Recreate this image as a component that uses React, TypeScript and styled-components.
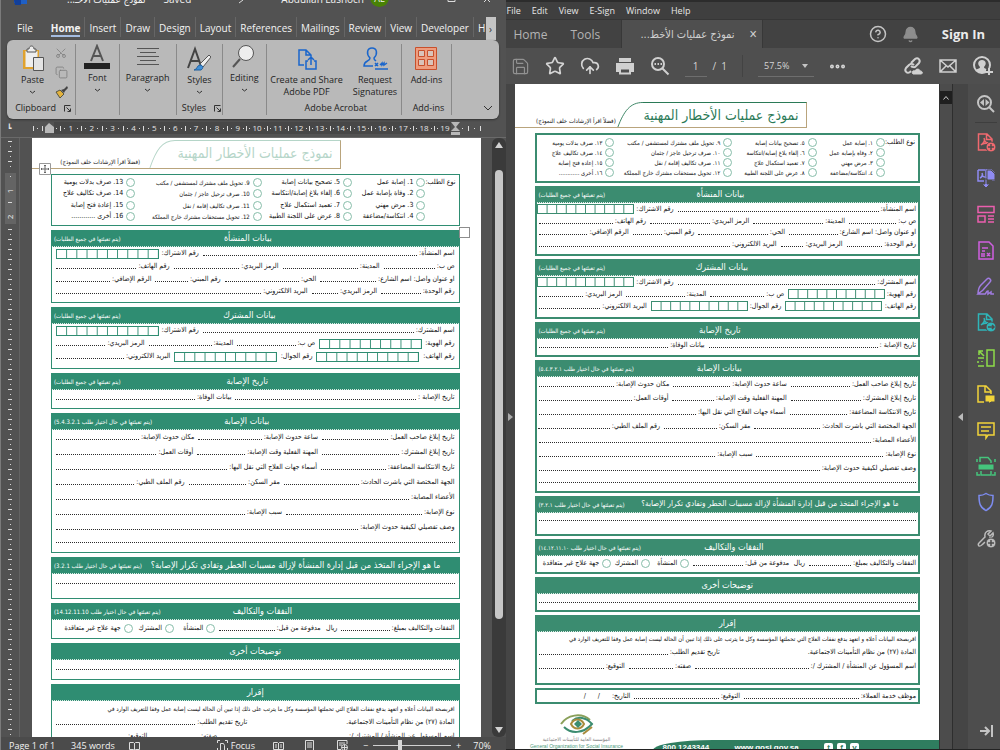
import React from "react";
import styled, { createGlobalStyle, ThemeProvider, css } from "styled-components";
import {
  Bell, CircleHelp, CloudUpload, Copy, Ellipsis, Save, Scissors, Star,
} from "lucide-react";

const GlobalStyle = createGlobalStyle`
  * { box-sizing: border-box; }
  html, body { margin: 0; padding: 0; background: #2b2b2b; }
  body { font-family: "Open Sans", "DejaVu Sans Condensed", "DejaVu Sans", sans-serif; overflow: hidden; }
  button, input { font: inherit; color: inherit; margin: 0; padding: 0; border: 0; background: none; border-radius: 0; }
  a { color: inherit; text-decoration: none; }
  svg { display: block; flex: none; }
`;

const arabic = `"DejaVu Sans Condensed", "DejaVu Sans", sans-serif`;

/* ---------- form themes ---------- */

const wordForm = {
  green: "#2f8d72", border: 1, gap: 4, head: 17, cells: 103, cellHeight: 10, arabicDigits: false,
  titleColor: "#b5d5c8", top: 2, headerHeight: 29, titleBox: 166, left: 19, right: 21, rowPad: 4, longTitle: 9,
  heights: { options: 52, s1: 73, s2: 62, s3: 36, s4: 140, s5: 42, s6: 36, s7: 37, s8: 70 },
};
const pdfForm = {
  green: "#3b8c70", border: 2, gap: 3, head: 17, cells: 97, cellHeight: 10, arabicDigits: true,
  titleColor: "#2b7a57", top: 18, headerHeight: 26, titleBox: 162, left: 20, right: 19, rowPad: 2, longTitle: 8,
  heights: { options: 50, s1: 70, s2: 60, s3: 35, s4: 133, s5: 40, s6: 35, s7: 35, s8: 70 },
};
type FormTheme = typeof wordForm;

/* ---------- form parts ---------- */

const Sheet = styled.form`
  flex: 1;
  min-width: 0;
  background: #fff;
  color: #111;
  padding-top: ${(p: any) => p.theme.top}px;
  font-family: ${arabic};
  font-size: 7px;
  line-height: 9px;
  overflow: hidden;
`;
const SheetHeader = styled.div`
  display: flex;
  align-items: stretch;
  width: 69%;
  height: ${(p: any) => p.theme.headerHeight}px;
  padding-left: ${(p: any) => p.theme.left}px;
  border-bottom: 1px solid #b9a47c;
`;
const Hint = styled.span`
  flex: 1 1 0;
  min-width: 0;
  align-self: flex-end;
  padding-bottom: 2px;
  font-size: 6px;
  line-height: 9px;
  white-space: nowrap;
  text-align: center;
`;
const FormTitle = styled.h1`
  margin: 0;
  flex: 0 0 ${(p: any) => p.theme.titleBox}px;
  padding-right: 8px;
  border-top: 1px solid ${(p: any) => p.theme.titleColor};
  border-right: 1px solid #b9a47c;
  color: ${(p: any) => p.theme.titleColor};
  font-size: 14px;
  font-weight: 400;
  line-height: 24px;
  text-align: right;
  white-space: nowrap;
`;
const FormBody = styled.div`
  display: flex;
  flex-direction: column;
  gap: ${(p: any) => p.theme.gap}px;
  padding: 5px ${(p: any) => p.theme.right}px 0 ${(p: any) => p.theme.left}px;
`;
const Options = styled.div<{ $h: number }>`
  min-height: ${(p) => p.$h}px;
  border: ${(p: any) => p.theme.border}px solid ${(p: any) => p.theme.green};
  padding: 2px 3px 3px;
  display: grid;
  grid-template-columns: 30fr 73fr 90fr 126fr 80fr;
`;
const OptionsLabel = styled.span`
  padding-top: 1px;
  white-space: nowrap;
`;
const OptionColumn = styled.div<{ $small: boolean }>`
  display: flex;
  flex-direction: column;
  min-width: 0;
  font-size: ${(p) => (p.$small ? 6 : 7)}px;
`;
const Choice = styled.label`
  flex: 1;
  display: flex;
  align-items: center;
  gap: 3px;
  white-space: nowrap;
  min-height: 9px;
`;
const Radio = styled.input.attrs({ type: "radio" })`
  appearance: none;
  flex: none;
  width: 9px;
  height: 9px;
  border: 1px solid #86bda9;
  border-radius: 50%;
`;
const Section = styled.section<{ $h: number }>`
  display: flex;
  flex-direction: column;
  min-height: ${(p) => p.$h}px;
  border: ${(p: any) => p.theme.border}px solid ${(p: any) => p.theme.green};
  border-top: 0;
`;
const SectionHead = styled.header<{ $right: number; $left: number }>`
  display: grid;
  grid-template-columns: minmax(0, ${(p) => p.$right}fr) auto minmax(0, ${(p) => p.$left}fr);
  align-items: center;
  height: ${(p: any) => p.theme.head}px;
  background: ${(p: any) => p.theme.green};
  border-bottom: 1px dotted #d8ebe4;
  color: #fff;
  white-space: nowrap;
`;
const SectionTitle = styled.h2<{ $long?: boolean }>`
  margin: 0;
  grid-column: 2;
  font-size: ${(p: any) => (p.$long ? p.theme.longTitle : 9)}px;
  line-height: 14px;
  font-weight: 400;
`;
const Note = styled.span`
  display: flex;
  justify-content: flex-end;
  padding-left: 2px;
  font-size: 6px;
`;
const Rows = styled.div<{ $bottom: number }>`
  flex: 1;
  display: flex;
  flex-direction: column;
  padding: 0 ${(p: any) => p.theme.rowPad}px ${(p) => p.$bottom}px;
`;
const Row = styled.div`
  flex: 1;
  display: flex;
  align-items: center;
`;
const FieldLabel = styled.label<{ $w: number }>`
  flex: ${(p) => p.$w} 1 0;
  min-width: 0;
  display: flex;
  align-items: center;
  gap: 2px;
  padding-left: 4px;
  white-space: nowrap;
  &:last-child { padding-left: 0; }
`;
const Leader = styled.input`
  flex: 1 1 0;
  min-width: 0;
  width: 0;
  height: 5px;
  border-bottom: 1px dotted #2c2c2c;
`;
const Cells = styled.input`
  margin-right: auto;
  flex: none;
  width: ${(p: any) => p.theme.cells}px;
  height: ${(p: any) => p.theme.cellHeight}px;
  border: 1px solid ${(p: any) => p.theme.green};
  border-left: 0;
  background-image: linear-gradient(to right, ${(p: any) => p.theme.green} 1px, transparent 1px);
  background-size: 10% 100%;
`;
const Text = styled.span<{ $w?: number }>`
  ${(p) => p.$w ? css`flex: ${p.$w} 1 0; min-width: 0;` : css`flex: none;`}
  white-space: nowrap;
`;
const Declaration = styled.p`
  flex: 1;
  margin: 0;
  font-size: 6px;
  white-space: nowrap;
`;
const SignBox = styled.div`
  display: flex;
  align-items: center;
  height: 16px;
  padding: 0 2px;
  border: 2px solid ${(p: any) => p.theme.green};
`;
const SheetFooter = styled.footer`
  display: flex;
  align-items: flex-start;
  padding: 8px 0 0 16px;
`;
const Brand = styled.div`
  display: flex;
  flex-direction: column;
  align-items: center;
  width: 92px;
  color: #777;
  font-size: 5px;
  line-height: 7px;
  white-space: nowrap;
`;
const BrandLatin = styled.span`
  color: #4b9a7c;
  font-family: "Liberation Sans", sans-serif;
`;
const Contact = styled.div`
  flex: 1;
  margin: 28px 0 0 30px;
  height: 30px;
  padding: 3px 80px 0 10px;
  display: flex;
  justify-content: space-between;
  background: #2f7d5f;
  border-top-left-radius: 60px 10px;
  color: #fff;
  font: 700 8px/10px "Liberation Sans", sans-serif;
`;
const Social = styled.span`
  display: flex;
  gap: 4px;
`;
const SocialLink = styled.a`
  width: 9px;
  height: 9px;
  border-radius: 2px;
  background: #fff;
  color: #2f7d5f;
  text-align: center;
`;

type FieldSpec = { w: number; t: string; kind?: "cells" | "text" };
const f = (w: number, t: string, kind?: "cells" | "text"): FieldSpec => ({ w, t, kind });

function FieldRow({ fields }: { fields: FieldSpec[] }) {
  return (
    <Row>
      {fields.map((x, i) =>
        x.kind === "text" ? (
          <Text key={i} $w={x.w}>{x.t}</Text>
        ) : (
          <FieldLabel key={i} $w={x.w}>
            {x.t && <Text>{x.t}</Text>}
            {x.kind === "cells" ? <Cells /> : <Leader aria-label={x.t ? undefined : "سطر إضافي"} />}
          </FieldLabel>
        )
      )}
    </Row>
  );
}

function Block({ title, note, h, right = 1, left = 1, bottom, long, children }: any) {
  return (
    <Section $h={h}>
      <SectionHead $right={right} $left={left}>
        <SectionTitle $long={long}>{title}</SectionTitle>
        {note && <Note>{note}</Note>}
      </SectionHead>
      <Rows $bottom={bottom}>{children}</Rows>
    </Section>
  );
}

const optionColumns = [
  ["إصابة عمل", "وفاة بإصابة عمل", "مرض مهني", "انتكاسة/مضاعفة"],
  ["تصحيح بيانات إصابة", "إلغاء بلاغ إصابة/انتكاسة", "تعميد استكمال علاج", "عرض على اللجنة الطبية"],
  ["تحويل ملف مشترك لمستشفى / مكتب", "صرف ترحيل عاجز / جثمان", "صرف تكاليف إقامة / نقل", "تحويل مستحقات مشترك خارج المملكة"],
  ["صرف بدلات يومية", "صرف تكاليف علاج", "إعادة فتح إصابة", "أخرى ............"],
];
const establishment = [
  [f(254, "اسم المنشأة:"), f(144, "رقم الاشتراك:", "cells")],
  [f(73, "ص ب:"), f(100, "المدينة:"), f(108, "الرمز البريدي:"), f(117, "رقم الهاتف:")],
  [f(138, "او عنوان واصل: اسم الشارع:"), f(94, "الحي:"), f(67, "رقم المبني:"), f(98, "الرقم الإضافي:")],
  [f(75, "رقم الوحدة:"), f(67, "الرمز البريدي:"), f(257, "البريد الالكتروني:")],
];
const subscriber = [
  [f(254, "اسم المشترك:"), f(144, "رقم الاشتراك:", "cells")],
  [f(139, "رقم الهوية:", "cells"), f(80, "ص ب:"), f(87, "المدينة:"), f(91, "الرمز البريدي:")],
  [f(140, "رقم الهاتف:", "cells"), f(140, "رقم الجوال:", "cells"), f(116, "البريد الالكتروني:")],
];
const injury = [
  [f(135, "تاريخ إبلاغ صاحب العمل:"), f(122, "ساعة حدوث الإصابة:"), f(141, "مكان حدوث الإصابة:")],
  [f(135, "تاريخ إبلاغ المشترك:"), f(123, "المهنة الفعلية وقت الإصابة:"), f(140, "أوقات العمل:")],
  [f(135, "تاريخ الانتكاسة المضاعفة:"), f(264, "أسماء جهات العلاج التي نقل اليها:")],
  [f(174, "الجهة المختصة التي باشرت الحادث:"), f(93, "مقر السكن:"), f(131, "رقم الملف الطبي:")],
  [f(398, "الأعضاء المصابة:")],
  [f(170, "نوع الإصابة:"), f(228, "سبب الإصابة:")],
  [f(398, "وصف تفصيلي لكيفية حدوث الإصابة:")],
  [f(398, "")],
];

function ReportForm({ theme, id, children }: { theme: FormTheme; id: string; children?: React.ReactNode }) {
  const digits = (s: string) =>
    theme.arabicDigits ? s.replace(/\d/g, (d) => "٠١٢٣٤٥٦٧٨٩"[Number(d)]) : s;
  const h = theme.heights;
  const all = "(يتم تعبئتها في جميع الطلبات)";
  const only = (n: string) => `(يتم تعبئتها في حال اختيار طلب ${digits(n)})`;
  return (
    <ThemeProvider theme={theme}>
      <Sheet>
        <SheetHeader>
          <Hint dir="rtl">(فضلاً اقرأ الإرشادات خلف النموذج)</Hint>
          <svg width="26" height={theme.headerHeight - 1} viewBox="0 0 30 27" fill="none" stroke={theme.titleColor} preserveAspectRatio="none">
            <path d="M1 27C8 10 15 .5 30 .5" />
          </svg>
          <FormTitle dir="rtl">نموذج عمليات الأخطار المهنية</FormTitle>
        </SheetHeader>
        <FormBody dir="rtl">
          <Options $h={h.options} role="radiogroup" aria-labelledby={`${id}-kind`}>
            <OptionsLabel id={`${id}-kind`}>نوع الطلب:</OptionsLabel>
            {optionColumns.map((col, c) => (
              <OptionColumn key={c} $small={c === 2 || theme.arabicDigits}>
                {col.map((label, r) => (
                  <Choice key={r}>
                    <Radio name={`${id}-request`} />
                    <span>{digits(String(c * 4 + r + 1))}. {label}</span>
                  </Choice>
                ))}
              </OptionColumn>
            ))}
          </Options>
          <Block title="بيانات المنشأة" note={all} h={h.s1} right={188} left={173} bottom={4}>
            {establishment.map((r, i) => <FieldRow key={i} fields={r} />)}
          </Block>
          <Block title="بيانات المشترك" note={all} h={h.s2} right={186} left={174} bottom={5}>
            {subscriber.map((r, i) => <FieldRow key={i} fields={r} />)}
          </Block>
          <Block title="تاريخ الإصابة" note={all} h={h.s3} right={190} left={174} bottom={4}>
            <FieldRow fields={[f(221, "تاريخ الإصابة :"), f(177, "بيانات الوفاة:")]} />
          </Block>
          <Block title="بيانات الإصابة" note={only("5.4.3.2.1")} h={h.s4} right={188} left={171} bottom={6}>
            {injury.map((r, i) => <FieldRow key={i} fields={r} />)}
          </Block>
          <Block long title="ما هو الإجراء المتخذ من قبل إدارة المنشأة لإزالة مسببات الخطر وتفادي تكرار الإصابة؟" note={only("3.2.1")} h={h.s5} right={19} left={103} bottom={10}>
            <FieldRow fields={[f(398, "")]} />
          </Block>
          <Block title="النفقات والتكاليف" note={only("14.12.11.10")} h={h.s6} right={165} left={179} bottom={2}>
            <Row>
              <FieldLabel $w={115}><Text>النفقات والتكاليف بمبلغ:</Text><Leader /></FieldLabel>
              <Text $w={17}>ريال</Text>
              <FieldLabel $w={103}><Text>مدفوعة من قبل:</Text><Leader /></FieldLabel>
              <Text $w={42}><Choice><Radio name={`${id}-payer`} />المنشأة</Choice></Text>
              <Text $w={42}><Choice><Radio name={`${id}-payer`} />المشترك</Choice></Text>
              <Text $w={78}><Choice><Radio name={`${id}-payer`} />جهة علاج غير متعاقدة</Choice></Text>
            </Row>
          </Block>
          <Block title="توضيحات أخرى" h={h.s7} bottom={4}>
            <FieldRow fields={[f(398, "")]} />
          </Block>
          <Block title="إقرار" h={h.s8} bottom={10}>
            <Row><Declaration>اقربصحة البيانات أعلاه و اتعهد بدفع نفقات العلاج التي تحملتها المؤسسة وكل ما يترتب على ذلك إذا تبين أن الحالة ليست إصابة عمل وفقا للتعريف الوارد في</Declaration></Row>
            <FieldRow fields={[f(207, "المادة (٢٧) من نظام التأمينات الاجتماعية.", "text"), f(191, "تاريخ تقديم الطلب:")]} />
            <FieldRow fields={[f(238, "اسم المسؤول عن المنشأة / المشترك /:"), f(67, "صفته:"), f(93, "التوقيع:")]} />
          </Block>
          {children}
        </FormBody>
        {children && (
          <SheetFooter>
            <Brand>
              <svg width="36" height="24" viewBox="0 0 36 24" fill="none" strokeWidth="2">
                <path d="M2 12C8 3 22 0 31 8" stroke="#8aa05a" />
                <path d="M5 15c7 7 19 7 28-3C27 5 19 4 13 9" stroke="#3c8c70" />
                <path d="M12 12c3-6 10-6 13 0-3 6-10 6-13 0z" stroke="#a98b3c" />
                <path d="m15 12 4-4 4 4-4 4z" fill="#3c8c70" stroke="none" />
                <path d="M24 22l9-7" stroke="#a98b3c" />
              </svg>
              <span dir="rtl">المؤسسة العامة للتأمينات الاجتماعية</span>
              <BrandLatin>General Organization for Social Insurance</BrandLatin>
            </Brand>
            <Contact>
              <span>800 1243344</span>
              <a href="#site">www.gosi.gov.sa</a>
              <Social>
                <SocialLink href="#t">t</SocialLink><SocialLink href="#f">f</SocialLink><SocialLink href="#y">y</SocialLink>
              </Social>
            </Contact>
          </SheetFooter>
        )}
      </Sheet>
    </ThemeProvider>
  );
}

/* ---------- Word window ---------- */

const Desktop = styled.main`
  display: flex;
  height: 100vh;
`;
const WordWindow = styled.section`
  flex: 505 1 0;
  min-width: 0;
  display: flex;
  flex-direction: column;
  background: #525252;
  border-left: 1px solid #7b7b7b;
  color: #f2f2f2;
  font-size: 10px;
  position: relative;
`;
const TitleBar = styled.header`
  height: 17px;
  overflow: hidden;
  display: flex;
  align-items: flex-start;
  padding: 0 16px 0 13px;
  line-height: 14px;
`;
const TitleText = styled.span<{ $before: number }>`
  margin: -8px 0 0 ${(p) => p.$before}px;
  font-family: "Open Sans", ${arabic};
  white-space: nowrap;
`;
const PenMark = styled.svg`
  margin-left: 46px;
`;
const Avatar = styled.span`
  margin: -12px 0 0 6px;
  width: 19px;
  height: 19px;
  border-radius: 50%;
  background: #498205;
  font-size: 9px;
  line-height: 22px;
  text-align: center;
`;
const WindowMarks = styled.svg`
  margin-left: auto;
`;
const Tabs = styled.nav`
  height: 23px;
  display: flex;
  align-items: stretch;
  padding: 0 10px 0 12px;
  overflow: hidden;
`;
const Tab = styled.button<{ $active?: boolean }>`
  padding: 0 4px;
  line-height: 18px;
  border-right: 1px solid #666;
  align-self: flex-start;
  flex: none;
  font-weight: ${(p) => (p.$active ? 700 : 400)};
  span { display: block; height: 20px; line-height: 23px; border-bottom: ${(p) => (p.$active ? "2px solid #a5bce0" : "0")}; }
`;
const FileTab = styled(Tab)`
  border: 0;
  margin-right: 10px;
`;
const LastTab = styled(Tab)`
  border: 0;
  padding-right: 0;
`;
const TabScroll = styled.button`
  margin-left: auto;
  flex: none;
  width: 10px;
  background: #c4c4c4;
  color: #333;
`;
const Ribbon = styled.div`
  margin: 0 7px 0 6px;
  height: 79px;
  display: flex;
  background: #b9b9b9;
  border-radius: 6px;
  box-shadow: 0 1px 2px #333;
  color: #232323;
  font-size: 9px;
  line-height: 12px;
`;
const Group = styled.div<{ $w: number; $last?: boolean }>`
  flex: ${(p) => p.$w} 1 0;
  min-width: 0;
  margin: 4px 0;
  border-right: ${(p) => (p.$last ? 0 : "1px solid #8a8a8a")};
  display: flex;
  flex-direction: column;
  align-items: center;
`;
const GroupTools = styled.div`
  flex: 1;
  display: flex;
  justify-content: center;
  gap: 10px;
`;
const BigButton = styled.button`
  display: flex;
  flex-direction: column;
  align-items: center;
  white-space: pre-line;
  svg + span { margin-top: 2px; }
`;
const ClipboardTools = styled(GroupTools)`
  padding-left: 6px;
`;
const SmallTools = styled.div`
  display: flex;
  flex-direction: column;
  gap: 7px;
  padding-top: 3px;
  color: #7c7c7c;
`;
const CutIcon = styled(Scissors)`
  transform: rotate(-90deg);
`;
const Caption = styled.div`
  display: flex;
  align-items: center;
  gap: 8px;
  height: 14px;
  padding-left: 4px;
  white-space: nowrap;
`;
const RibbonToggle = styled.button`
  margin: auto 6px 4px auto;
`;
const RulerBar = styled.div`
  display: flex;
  align-items: center;
  height: 12px;
  margin: 3px 0;
  padding-left: 6px;
  font-size: 8px;
  line-height: 12px;
  color: #e4e4e4;
`;
const RulerCorner = styled.span`
  width: 24px;
  font-weight: 700;
`;
const RulerScale = styled.div`
  flex: 397 1 0;
  display: flex;
  background: #474747;
`;
const RulerEdge = styled.div<{ $w: number }>`
  flex: ${(p) => p.$w} 1 0;
  display: flex;
  justify-content: space-around;
  align-items: center;
`;
const RulerCell = styled.span`
  flex: 1 1 0;
  min-width: 0;
  display: flex;
  align-items: center;
  justify-content: space-around;
`;
const Mark = styled.i<{ $tall?: boolean }>`
  width: 1px;
  height: ${(p) => (p.$tall ? 5 : 1)}px;
  background: #dcdcdc;
`;
const WordBody = styled.div`
  flex: 1;
  min-height: 0;
  display: flex;
  border-top: 1px solid #6a6a6a;
`;
const SideRuler = styled.div`
  width: 19px;
  flex: none;
  border-right: 1px solid #636363;
  display: flex;
  flex-direction: column;
  align-items: center;
  padding: 3px 0 0;
  overflow: hidden;
`;
const SideTick = styled.i<{ $wide?: boolean }>`
  flex: none;
  width: ${(p) => (p.$wide ? 4 : 1)}px;
  height: 1px;
  margin-bottom: 4px;
  background: #d9d9d9;
`;
const SideMargin = styled.div`
  flex: none;
  width: 11px;
  height: 51px;
  margin: 2px 0 5px;
  display: flex;
  flex-direction: column;
  align-items: center;
  justify-content: space-around;
  background: #646464;
  font-size: 8px;
  line-height: 8px;
  span { transform: rotate(-90deg); }
`;
const Gutter = styled.div<{ $w: number }>`
  flex: none;
  width: ${(p) => p.$w}px;
`;
const ScrollTrack = styled.div`
  flex: none;
  width: 14px;
  background: #3a3a3a;
  display: flex;
  flex-direction: column;
  align-items: center;
  padding: 4px 0;
  border-radius: 6px;
`;
const ScrollThumb = styled.div`
  width: 8px;
  margin: 22px 0 auto;
  height: 76%;
  border-radius: 4px;
  background: #c6c6c6;
`;
const Arrow = styled.i<{ $down?: boolean }>`
  border: 4px solid transparent;
  border-${(p) => (p.$down ? "top" : "bottom")}: 6px solid #d2d2d2;
  border-${(p) => (p.$down ? "bottom" : "top")}-width: 0;
`;
const MoveHandle = styled.svg`
  position: absolute;
  left: 38px;
  top: 163px;
`;
const SizeHandle = styled.i`
  position: absolute;
  left: 458px;
  top: 227px;
  width: 11px;
  height: 11px;
  background: #fff;
  border: 1px solid #8d8d8d;
`;
const StatusBar = styled.footer`
  height: 13px;
  flex: none;
  display: flex;
  align-items: flex-start;
  padding: 2px 14px 0 8px;
  background: #4b4b4b;
  overflow: hidden;
  font-size: 9px;
  line-height: 13px;
  white-space: nowrap;
`;
const StatusItem = styled.button<{ $before: number }>`
  margin-left: ${(p) => p.$before}px;
  display: flex;
  align-items: center;
  gap: 3px;
  height: 13px;
`;
const Zoom = styled.input.attrs({ type: "range", min: 0, max: 100, defaultValue: 34 })`
  appearance: none;
  width: 78px;
  height: 12px;
  margin: 0 5px;
  background: linear-gradient(#d0d0d0, #d0d0d0) center / 100% 1px no-repeat;
  &::-webkit-slider-thumb { appearance: none; width: 4px; height: 10px; background: #d6d6d6; }
`;

const Chevron = () => (
  <svg width="7" height="10" viewBox="0 0 7 10" fill="none" stroke="#333"><path d="m1 5 2.500 2L6 5" /></svg>
);
const Launcher = () => (
  <svg width="7" height="7" viewBox="0 0 7 7" fill="none" stroke="#333"><path d="M.5 6.500V.5h6M2.500 2.500 6 6M6.500 3.500v3h-3" /></svg>
);

function WordApp() {
  return (
    <WordWindow>
      <TitleBar>
        <svg width="13" height="5" viewBox="0 0 13 5"><path fill="#1f5fc4" d="M0 0h13v4H4V3H0z" /><path fill="#123f99" d="M0 0h7v5H1z" /></svg>
        <TitleText $before={40} dir="rtl">نموذج عمليات الأخـ...</TitleText>
        <TitleText $before={18}>Saved</TitleText>
        <PenMark width="8" height="4" viewBox="0 0 8 4" fill="none" stroke="#ddd"><path d="M6 0 2 3" /></PenMark>
        <TitleText $before={36}>Abdullah Lashoch</TitleText>
        <Avatar>AL</Avatar>
        <WindowMarks width="50" height="4" viewBox="0 0 50 4" fill="none" stroke="#ddd"><path d="M8 0v1.500h7V0M44 2l3-3 3 3" /></WindowMarks>
      </TitleBar>
      <Tabs>
        <FileTab><span>File</span></FileTab>
        <Tab $active><span>Home</span></Tab>
        {["Insert", "Draw", "Design", "Layout", "References", "Mailings", "Review", "View", "Developer"].map((t) => (
          <Tab key={t}><span>{t}</span></Tab>
        ))}
        <LastTab><span>H</span></LastTab>
        <TabScroll>›</TabScroll>
      </Tabs>
      <Ribbon>
        <Group $w={69}>
          <ClipboardTools>
            <BigButton>
              <svg width="24" height="28" viewBox="0 0 24 28">
                <path d="M2 6h16v19H2z" fill="#e0a22e" /><path d="M4.500 7h12v16h-12z" fill="#eee" />
                <path d="M6 8V5h2c0-4 5-4 5 0h2v3z" fill="#eee" stroke="#555" />
                <path d="M12.500 13.500h10v13h-10z" fill="#e4e4e4" stroke="#555" />
              </svg>
              <span>Paste</span><Chevron />
            </BigButton>
            <SmallTools>
              <CutIcon size={12} strokeWidth={1.500} />
              <Copy size={13} strokeWidth={1.500} />
              <svg width="13" height="12" viewBox="0 0 13 12"><path d="m1 6 4-2 4 4-4 4z" fill="#e3b23d" stroke="#554" /><path d="m6 4 3-1 3-3 1 2-3 3-1 2z" fill="#444" /></svg>
            </SmallTools>
          </ClipboardTools>
          <Caption>Clipboard <Launcher /></Caption>
        </Group>
        <Group $w={43}>
          <GroupTools>
            <BigButton>
              <svg width="26" height="26" viewBox="0 0 26 26" fill="none" stroke="#555" strokeWidth="2"><path d="m7 17 6-15 6 15M9 12h8" /><path d="M0 19h26v6H0z" fill="#222" stroke="none" /></svg>
              <span>Font</span><Chevron />
            </BigButton>
          </GroupTools>
        </Group>
        <Group $w={57}>
          <GroupTools>
            <BigButton>
              <svg width="24" height="26" viewBox="0 0 24 26" fill="none" stroke="#555"><path d="M1 4.500h22M4 8.500h16M1 12.500h22M4 16.500h16M1 20.500h22" /></svg>
              <span>Paragraph</span><Chevron />
            </BigButton>
          </GroupTools>
        </Group>
        <Group $w={46}>
          <GroupTools>
            <BigButton>
              <svg width="24" height="28" viewBox="0 0 24 28" fill="none"><path d="M1 24 8 5l6 17M4 17h8" stroke="#444" strokeWidth="2" /><path d="m13 20 9-9 2 2-8 10z" fill="#eee" stroke="#555" /><path d="M7 26c3 0 3-5 6-5s4 3 1 5z" fill="#3f8fd8" stroke="#1f5f9e" /></svg>
              <span>Styles</span><Chevron />
            </BigButton>
          </GroupTools>
          <Caption>Styles <Launcher /></Caption>
        </Group>
        <Group $w={43}>
          <GroupTools>
            <BigButton>
              <svg width="24" height="26" viewBox="0 0 24 26" fill="none" stroke="#555"><path d="m8 15-7 8" strokeWidth="2" /><circle cx="14" cy="9" r="7.500" fill="#eee" /></svg>
              <span>Editing</span><Chevron />
            </BigButton>
          </GroupTools>
        </Group>
        <Group $w={136}>
          <GroupTools>
            <BigButton>
              <svg width="20" height="28" viewBox="0 0 20 28" fill="none" stroke="#1a66cc" strokeWidth="1.500"><path d="M7 21H2V6h7l5 5v3M9 6v5h5M11 17H9v8h10v-8h-2M14 21v-8m-3 3 3-3 3 3" /></svg>
              <span>{"Create and Share\nAdobe PDF"}</span>
            </BigButton>
            <BigButton>
              <svg width="26" height="28" viewBox="0 0 26 28" fill="none" stroke="#1a66cc" strokeWidth="1.500"><path d="M11 22H2c0-6 6-4 6-8-4-4-3-10 2-10s6 6 2 10c0 2 1 2 2 3M13 25h13M13 19l3 3m0-3-3 3M18 21l2-2v2l2-2v2l3-2" /></svg>
              <span>{"Request\nSignatures"}</span>
            </BigButton>
          </GroupTools>
          <Caption>Adobe Acrobat</Caption>
        </Group>
        <Group $w={50}>
          <GroupTools>
            <BigButton>
              <svg width="24" height="28" viewBox="0 0 24 28" fill="none" stroke="#c8502c"><path d="M1.500 3.500h21v22h-21z" fill="#ee9d7f" /><path d="M4.500 6.500h6v6h-6zM13.500 6.500h6v6h-6zM4.500 15.500h6v6h-6zM13.500 15.500h6v6h-6z" fill="#d9c4bb" /></svg>
              <span>Add-ins</span>
            </BigButton>
          </GroupTools>
          <Caption>Add-ins</Caption>
        </Group>
        <Group $w={47} $last>
          <RibbonToggle aria-label="Collapse ribbon"><svg width="10" height="6" viewBox="0 0 10 6" fill="none" stroke="#333"><path d="m1 1 4 4 4-4" /></svg></RibbonToggle>
        </Group>
      </Ribbon>
      <RulerBar>
        <RulerCorner>┗</RulerCorner>
        <RulerEdge $w={14}><Mark $tall /><Mark /><Mark $tall /></RulerEdge>
        <svg width="9" height="10" viewBox="0 0 9 10" fill="#b8b8b8"><path d="M4 0 9 4v6H0V4z" /></svg>
        <RulerScale>
          {Array.from({ length: 19 }, (_, i) => (
            <RulerCell key={i}><Mark /><Mark $tall /><Mark />{i + 1}</RulerCell>
          ))}
        </RulerScale>
        <svg width="9" height="13" viewBox="0 0 9 13" fill="#b8b8b8"><path d="M0 0h9L5 5l4 4H0l4-4zM0 10h9v3H0z" /></svg>
        <RulerEdge $w={24}><Mark /><Mark $tall /><Mark /><Mark $tall /></RulerEdge>
        <Gutter $w={22} />
      </RulerBar>
      <WordBody>
        <SideRuler>
          <SideTick $wide /><SideTick /><SideTick $wide /><SideTick /><SideTick $wide /><SideTick />
          <SideMargin><SideTick /><span>1</span><SideTick $wide /><span>2</span></SideMargin>
          {Array.from({ length: 104 }, (_, i) => <SideTick key={i} $wide={i % 2 === 0} />)}
        </SideRuler>
        <Gutter $w={12} />
        <ReportForm theme={wordForm} id="word" />
        <Gutter $w={11} />
        <ScrollTrack><Arrow /><ScrollThumb /><Arrow $down /></ScrollTrack>
      </WordBody>
      <MoveHandle width="12" height="12" viewBox="0 0 12 12" fill="#fff" stroke="#666"><path d="M.5.5h11v11H.5z" stroke="#999" /><path d="M6 2v8M2 6h8M5 3l1-1 1 1M5 9l1 1 1-1M3 5 2 6l1 1M9 5l1 1-1 1" fill="none" /></MoveHandle>
      <SizeHandle />
      <StatusBar>
        <StatusItem $before={0}>Page 1 of 1</StatusItem>
        <StatusItem $before={16}>345 words</StatusItem>
        <StatusItem $before={14} aria-label="Proofing"><svg width="11" height="10" viewBox="0 0 11 10" fill="none" stroke="#ddd"><path d="M.5 1.500h4l1 1 1-1h4v7h-4l-1 1-1-1h-4zM5.500 2v7" /></svg></StatusItem>
        <StatusItem $before={77}><svg width="11" height="11" viewBox="0 0 11 11" fill="none" stroke="#ddd"><path d="M3.500 3.500h3l1 2v5h-4zM.5 3V.5H3M8 .5h2.500V3M.5 8v2.500M10.500 8v2.500" /></svg>Focus</StatusItem>
        <StatusItem $before={18} aria-label="Read mode"><svg width="11" height="10" viewBox="0 0 11 10" fill="none" stroke="#ddd"><path d="M.5 1.500h4l1 1 1-1h4v7H.5zM5.500 2v7M2 4h2M2 6h2M7 4h2M7 6h2" /></svg></StatusItem>
        <StatusItem $before={21} aria-label="Print layout"><svg width="9" height="11" viewBox="0 0 9 11" fill="none" stroke="#ddd"><path d="M.5.5h8v10h-8zM2 3h5M2 5h5M2 7h5" /></svg></StatusItem>
        <StatusItem $before={23} aria-label="Web layout"><svg width="11" height="11" viewBox="0 0 11 11" fill="none" stroke="#ddd"><path d="M10 4V.5H.5v9H4M2 3h6M2 5h3" /><circle cx="7.500" cy="7.500" r="3" /><path d="M4.500 7.500h6M7.500 4.500v6" /></svg></StatusItem>
        <StatusItem $before={15}>−</StatusItem>
        <Zoom aria-label="Zoom" />
        <StatusItem $before={0}>+</StatusItem>
        <StatusItem $before={12}>70%</StatusItem>
      </StatusBar>
    </WordWindow>
  );
}

/* ---------- Acrobat window ---------- */

const AcrobatWindow = styled.section`
  flex: 495 1 0;
  min-width: 0;
  display: flex;
  flex-direction: column;
  background: #424242;
  border-top: 2px solid #2c2c2c;
  border-bottom: 1px solid #232323;
  color: #e6e6e6;
`;
const MenuBar = styled.nav`
  display: flex;
  gap: 11px;
  height: 17px;
  padding-left: 1px;
  font-size: 9px;
  line-height: 16px;
  background: #3f3f3f;
`;
const DocTabs = styled.div`
  display: flex;
  align-items: stretch;
  height: 29px;
  font-size: 12px;
  color: #b4b4b4;
  border-top: 1px solid #363636;
`;
const HomeTabs = styled.div`
  flex: 1 1 116px;
  min-width: 0;
  display: flex;
  align-items: center;
  gap: 23px;
  padding-left: 8px;
`;
const DocTab = styled.div`
  flex: 1 1 142px;
  min-width: 0;
  display: flex;
  align-items: center;
  justify-content: space-between;
  padding: 0 5px 0 18px;
  background: #4f4f4f;
  border: 1px solid #383838;
  border-width: 0 1px;
  font-family: ${arabic};
  font-size: 11px;
  color: #cfcfcf;
  white-space: nowrap;
`;
const Account = styled.div`
  flex: 1 1 237px;
  display: flex;
  align-items: center;
  justify-content: flex-end;
  padding-right: 15px;
  gap: 15px;
  color: #c4c4c4;
`;
const SignIn = styled.button`
  margin-left: 8px;
  font-size: 13px;
  font-weight: 700;
  color: #ececec;
`;
const ToolBar = styled.div`
  display: flex;
  align-items: center;
  height: 36px;
  padding: 0 7px 0 5px;
  background: #4f4f4f;
  color: #d4d4d4;
  font-size: 10px;
`;
const IconRow = styled.div<{ $gap: number; $end?: boolean }>`
  display: flex;
  align-items: center;
  gap: ${(p) => p.$gap}px;
  margin-left: ${(p) => (p.$end ? "auto" : 0)};
`;
const IconButton = styled.button<{ $dim?: boolean }>`
  display: flex;
  opacity: ${(p) => (p.$dim ? 0.5 : 1)};
`;
const PageInput = styled.input`
  width: 22px;
  height: 22px;
  margin: 0 6px 0 15px;
  border-bottom: 1px solid #6e6e6e;
  text-align: center;
`;
const ZoomPicker = styled.button`
  display: flex;
  align-items: center;
  justify-content: space-between;
  width: 56px;
  height: 22px;
  margin: 0 14px 0 15px;
  padding: 0 6px;
  border-bottom: 1px solid #6e6e6e;
  font-size: 9px;
`;
const Divider = styled.i`
  width: 1px;
  height: 22px;
  margin-left: 15px;
  background: #434343;
`;
const Caret = styled.i`
  border: 3px solid transparent;
  border-top: 4px solid #c4c4c4;
  border-bottom: 0;
`;
const AcrobatBody = styled.div`
  flex: 1;
  min-height: 0;
  display: flex;
`;
const PaneEdge = styled.button<{ $w: number }>`
  flex: none;
  width: ${(p) => p.$w}px;
  display: flex;
  align-items: center;
  justify-content: center;
  background: #454545;
`;
const PdfScroll = styled.div`
  flex: none;
  width: 14px;
  border-right: 1px solid #2e2e2e;
  background: #4c4c4c;
  padding-top: 7px;
  border-left: 1px solid #333;
`;
const PdfScrollButton = styled.button`
  display: flex;
  width: 12px;
  height: 13px;
  align-items: center;
  justify-content: center;
  background: #1f1f1f;
`;
const ToolRail = styled.aside`
  flex: none;
  width: 32px;
  display: flex;
  flex-direction: column;
  align-items: center;
  gap: 16px;
  padding: 10px 0 12px 4px;
  background: #4d4d4d;
`;
const RailRule = styled.i`
  width: 22px;
  height: 1px;
  margin: -8px 0 -7px;
  background: #3e3e3e;
`;
const RailButton = styled.button`
  display: flex;
  &:last-child { margin-top: auto; }
`;

const pdfPage = "M14 18H2.500V2H11l5 5v3M10.500 2v5.500H16M5 13c3-2 4-5 3-7M8 8c1 2 3 3 5 3M5 13c2-2 5-2 8-2";
const railIcons = [
  { name: "Export PDF", c: "#8f8bf2", d: "M2 2h7M2 2v11h6M16 12h2V5l-3-3h-5v8h2M4 10c2-1 3-3 2-5m0 2c0 1 2 2 3 2", fill: "M11 2h4l4 4v6h-8zM9 11h2v5h3l-4 4-4-4h3z" },
  { name: "Edit PDF", c: "#ec5fae", d: "M2 2.500h16v6H2zM2 12h7v6H2zM12 12h6M12 15h6M12 18h6" },
  { name: "Organize", c: "#cf5fe0", d: "M3 2h10l4 4v13H3zM6 8h6M6 11h3M11 13l3 3m0-3-3 3M6 13v4M8 13v4" },
  { name: "Fill & Sign", c: "#a07be0", d: "M2 18c0-4 1-7 3-9l6-6c2-2 5 1 3 3l-7 8c-2 2-4 3-5 4h7c1 0 1-3 3-3v3l3-2v2h3" },
  { name: "Send", c: "#2fb5b9", d: pdfPage, badge: "M12 15h6m-2-2 2 2-2 2" },
  { name: "Compress", c: "#8ddc49", d: "M11 2h7v16h-7zM8 10H2M2 18h6M2 13v2M8 8 3 3M3 7V3h4M6 13v1", },
  { name: "Add comment", c: "#f2d43a", d: "M8 18H2V2h8l5 5v3M9 2v6h6", fill: "M9 11h10v7h-4l-2 2v-2H9z" },
  { name: "Comment", c: "#f2d43a", d: "M2 3h16v12h-6l-2 3v-3H2zM5 7h10M5 11h8" },
  { name: "Scan", c: "#45c47c", d: "M4 6V1.500h8L15 5v2M1 6V3M19 6V3M1 16v3h3M19 16v3h-3M5 15v4h10v-4", fill: "M2 8h16v6H2z" },
  { name: "Protect", c: "#7d8cf0", d: "M10 1.500c3 2 5 2 7 2 0 8-1 12-7 15-6-3-7-7-7-15 2 0 4 0 7-2z" },
  { name: "More tools", c: "#bdbdbd", d: "M3 18c-2-2 0-3 6-9-1-5 3-7 6-6l-3 3 2 2 3-3c1 3-1 5-4 5M3 18c1 1 3-1 6-4", badge: "M15 12v6M12 15h6" },
];

function AcrobatApp() {
  return (
    <AcrobatWindow>
      <MenuBar>{["File", "Edit", "View", "E-Sign", "Window", "Help"].map((m) => <button key={m}>{m}</button>)}</MenuBar>
      <DocTabs>
        <HomeTabs><button>Home</button><button>Tools</button></HomeTabs>
        <DocTab><span dir="rtl">نموذج عمليات الأخط...</span><button>✕</button></DocTab>
        <Account>
          <CircleHelp size={18} strokeWidth={2} />
          <Bell size={17} fill="#8d8d8d" stroke="#8d8d8d" />
          <SignIn>Sign In</SignIn>
        </Account>
      </DocTabs>
      <ToolBar>
        <IconRow $gap={15}>
          <IconButton $dim aria-label="Save"><Save size={19} strokeWidth={1.500} /></IconButton>
          <IconButton aria-label="Favorite"><Star size={20} strokeWidth={2} /></IconButton>
          <IconButton aria-label="Upload"><CloudUpload size={20} strokeWidth={2} /></IconButton>
          <IconButton aria-label="Print">
            <svg width="20" height="20" viewBox="0 0 20 20" fill="#d0d0d0"><path d="M4 2h12v4H4z" /><path d="M1 7h18v9h-3v-4H4v4H1z" /><path d="M5 12.500h10v5H5z" fill="none" stroke="#d0d0d0" strokeWidth="2" /></svg>
          </IconButton>
          <IconButton aria-label="Find">
            <svg width="20" height="20" viewBox="0 0 20 20" fill="none" stroke="#d0d0d0" strokeWidth="2"><circle cx="8" cy="8" r="6" /><path d="m12.500 12.500 6 6M4.500 8h1.500M7.500 8H9M10.500 8H12" /></svg>
          </IconButton>
        </IconRow>
        <PageInput aria-label="Page" defaultValue="1" /><span>/&nbsp; 1</span>
        <Divider />
        <ZoomPicker>57.5% <Caret /></ZoomPicker>
        <IconButton aria-label="More"><Ellipsis size={19} strokeWidth={3} /></IconButton>
        <IconRow $gap={16} $end>
          <IconButton aria-label="Share link">
            <svg width="20" height="20" viewBox="0 0 20 20" fill="none" stroke="#d0d0d0" strokeWidth="2"><path d="m8 7 4-4c3-2 6 1 4 4l-3 3c-1 2-4 1-5 0M11 9c-2-2-4-1-5 0l-3 3c-2 3 1 6 4 4l1-1" /><path d="M10 18c-2-2 0-4 2-3 1-3 5-2 5 0 3 0 3 3 1 3z" fill="#d0d0d0" strokeWidth="1" /></svg>
          </IconButton>
          <IconButton aria-label="Email">
            <svg width="18" height="14" viewBox="0 0 18 14" fill="none" stroke="#d0d0d0" strokeWidth="1.500"><path d="M1 1h16v12H1zM1 1l8 7 8-7M1 13l6-6M17 13l-6-6" /></svg>
          </IconButton>
          <IconButton aria-label="Invite">
            <svg width="20" height="20" viewBox="0 0 20 20"><circle cx="9" cy="9" r="8" fill="none" stroke="#d0d0d0" strokeWidth="2" /><path d="M3 14c2-2 4-1 4-3-3-3-2-7 2-7s5 4 2 7c0 2 2 1 4 3-3 4-9 4-12 0z" fill="#d0d0d0" /><path d="M16 12v7m-3-3h7" stroke="#4f4f4f" strokeWidth="5" /><path d="M16 12v7m-3-3h7" stroke="#d0d0d0" strokeWidth="2" /></svg>
          </IconButton>
        </IconRow>
      </ToolBar>
      <AcrobatBody>
        <PaneEdge $w={9} aria-label="Show navigation"><svg width="5" height="8" viewBox="0 0 5 8" fill="#aaa"><path d="m0 0 5 4-5 4z" /></svg></PaneEdge>
        <ReportForm theme={pdfForm} id="pdf">
          <SignBox>
            <FieldLabel $w={176}><Text>موظف خدمة العملاء:</Text><Leader /></FieldLabel>
            <FieldLabel $w={108}><Text>التوقيع:</Text><Leader /></FieldLabel>
            <Text $w={94}>التاريخ: &nbsp; &nbsp; &nbsp;/ &nbsp; &nbsp; &nbsp;/</Text>
          </SignBox>
        </ReportForm>
        <PdfScroll><PdfScrollButton aria-label="Scroll up"><svg width="6" height="4" viewBox="0 0 6 4" fill="none" stroke="#ccc"><path d="m.5 3.500 2.500-3 2.500 3" /></svg></PdfScrollButton></PdfScroll>
        <PaneEdge $w={15} aria-label="Hide tools"><svg width="5" height="8" viewBox="0 0 5 8" fill="#bbb"><path d="M5 0 0 4l5 4z" /></svg></PaneEdge>
        <ToolRail>
          <RailButton aria-label="Search tools"><svg width="20" height="20" viewBox="0 0 20 20" fill="none" stroke="#c4c4c4" strokeWidth="2"><circle cx="8.500" cy="8.500" r="6.500" /><path d="m13 13 5 5" /><path d="M8 5v7L4 8.500zM9.500 5v7l4-3.500z" fill="#c4c4c4" stroke="none" /></svg></RailButton>
          <RailRule />
          <RailButton aria-label="Create PDF"><svg width="20" height="20" viewBox="0 0 20 20" fill="none" stroke="#f0696f" strokeWidth="1.500"><path d={pdfPage} /><circle cx="15" cy="15" r="5" fill="#f0696f" stroke="#4d4d4d" strokeWidth="1" /><path d="M15 12v6M12 15h6" stroke="#4d4d4d" /></svg></RailButton>
          {railIcons.map((x) => (
            <RailButton key={x.name} aria-label={x.name}>
              <svg width="20" height="20" viewBox="0 0 20 20" fill="none" stroke={x.c} strokeWidth="1.500">
                <path d={x.d} />
                {x.fill && <path d={x.fill} fill={x.c} stroke="#4d4d4d" strokeWidth="1" />}
                {x.badge && <><circle cx="15" cy="15" r="5" fill={x.c} stroke="#4d4d4d" strokeWidth="1" /><path d={x.badge} stroke="#4d4d4d" /></>}
              </svg>
            </RailButton>
          ))}
          <RailButton aria-label="Collapse"><svg width="14" height="12" viewBox="0 0 14 12" fill="none" stroke="#c4c4c4" strokeWidth="2"><path d="M1 6h8M6 2l4 4-4 4M13 0v12" /></svg></RailButton>
        </ToolRail>
      </AcrobatBody>
    </AcrobatWindow>
  );
}

export default function App() {
  return (
    <>
      <GlobalStyle />
      <Desktop><WordApp /><AcrobatApp /></Desktop>
    </>
  );
}
